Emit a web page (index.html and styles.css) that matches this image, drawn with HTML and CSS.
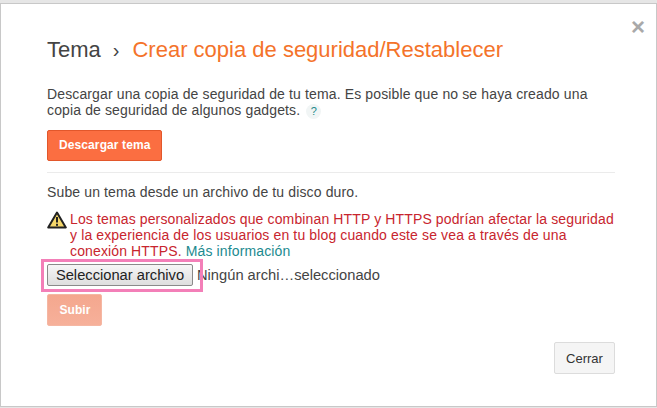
FILE: index.html
```html
<!DOCTYPE html>
<html lang="es">
<head>
    <meta charset="UTF-8">
    <meta name="viewport" content="width=device-width, initial-scale=1.0">
    <title>Crear copia de seguridad/Restablecer</title>
    <link rel="stylesheet" href="styles.css">
</head>

<body>
    <div class="dialog">
        <span class="close">&times;</span>
        <h1><span class="crumb">Tema</span><span class="sep">›</span><span class="current">Crear copia de seguridad/Restablecer</span></h1>

        <p class="intro">Descargar una copia de seguridad de tu tema. Es posible que no se haya creado una copia de seguridad de algunos gadgets. <span class="help">?</span></p>
        <button type="button" class="btn-primary">Descargar tema</button>

        <hr>

        <p class="upload-text">Sube un tema desde un archivo de tu disco duro.</p>

        <div class="warning">
            <svg class="warning-icon" width="20" height="18" viewBox="0 0 20 18">
                <path d="M10 1.5 L18.8 16.5 H1.2 Z" fill="#f5d76a" stroke="#222" stroke-width="2" stroke-linejoin="round"/>
                <path d="M10 6 V11.5" stroke="#222" stroke-width="2"/>
                <rect x="9" y="12.8" width="2" height="2" fill="#222"/>
            </svg>
            <p>Los temas personalizados que combinan HTTP y HTTPS podrían afectar la seguridad y la experiencia de los usuarios en tu blog cuando este se vea a través de una conexión HTTPS. <a href="#">Más información</a></p>
        </div>

        <div class="file-row">
            <button type="button" class="btn-file">Seleccionar archivo</button>
            <span class="file-name">Ningún archi…seleccionado</span>
            <div class="highlight"></div>
        </div>

        <button type="button" class="btn-primary btn-disabled">Subir</button>

        <div class="footer">
            <button type="button" class="btn-close">Cerrar</button>
        </div>
    </div>
</body>

</html>
```

FILE: styles.css
```css
* {
    margin: 0;
    padding: 0;
    box-sizing: border-box;
}

body {
    font-family: "Liberation Sans", Arial, sans-serif;
    font-size: 14px;
    color: #444;
    background-color: #e6e6e6;
    padding-top: 3px;
    overflow: hidden;
}

.dialog {
    position: relative;
    height: 404px;
    background-color: #fff;
    border: 1px solid #c8c8c8;
    padding: 33px 41px 0 46px;
}

.close {
    position: absolute;
    top: 9px;
    right: 11px;
    font-size: 24px;
    line-height: 28px;
    font-weight: bold;
    color: #a9a9a9;
}

h1 {
    font-size: 22px;
    font-weight: normal;
    line-height: 26px;
}

.sep {
    margin: 0 13px 0 12px;
    font-size: 20px;
}

.current {
    color: #f4732a;
}

.intro {
    margin-top: 23px;
    line-height: 16px;
    letter-spacing: 0.13px;
}

.help {
    display: inline-block;
    width: 15px;
    height: 15px;
    margin-left: 2px;
    border-radius: 50%;
    background-color: #f1f5f5;
    color: #1e8a8a;
    font-size: 11px;
    line-height: 15px;
    text-align: center;
}

.btn-primary {
    display: block;
    font-family: inherit;
    font-size: 12px;
    font-weight: bold;
    letter-spacing: 0.1px;
    color: #fff;
    height: 31px;
    padding: 0 11px 2px;
    margin-top: 11px;
    background-color: #fb6e41;
    border: 1px solid #e2572b;
    border-radius: 2px;
}

hr {
    border: none;
    border-top: 1px solid #ebebeb;
    margin: 11px 0 0;
}

.upload-text {
    margin-top: 11px;
    line-height: 16px;
    letter-spacing: 0.13px;
}

.warning {
    display: flex;
    gap: 3px;
    margin-top: 11px;
    color: #c8252e;
    line-height: 16px;
    letter-spacing: 0.13px;
}

.warning-icon {
    flex-shrink: 0;
}

.warning a {
    color: #1c8a8f;
    text-decoration: none;
}

.file-row {
    position: relative;
    display: flex;
    align-items: center;
    margin-top: 4px;
    height: 24px;
}

.btn-file {
    font-family: inherit;
    font-size: 14.7px;
    color: #222;
    width: 146px;
    height: 22px;
    background: linear-gradient(#f6f6f6, #dedede);
    border: 1px solid #8a8a8a;
    border-radius: 2px;
}

.file-name {
    margin-left: 4px;
    font-size: 14.7px;
    color: #444;
}

.highlight {
    position: absolute;
    left: -6px;
    top: -4px;
    width: 162px;
    height: 33px;
    border: 3px solid #f37fb8;
}

.btn-disabled {
    width: 55px;
    height: 32px;
    padding: 0 0 0 1px;
    margin-top: 7px;
    background: linear-gradient(#f4a78e, #f6b09a);
    border-color: #f5b7a3;
}

.footer {
    display: flex;
    justify-content: flex-end;
    margin-top: 16px;
}

.btn-close {
    font-family: inherit;
    font-size: 13px;
    color: #333;
    width: 61px;
    height: 32px;
    background-color: #f5f5f5;
    border: 1px solid #dcdcdc;
    border-radius: 2px;
}
```
